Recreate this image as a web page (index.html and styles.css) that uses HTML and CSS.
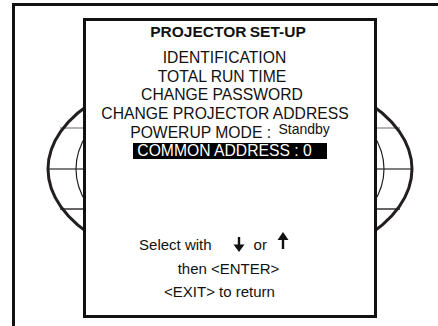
FILE: index.html
```html
<!DOCTYPE html>
<html lang="en">

<head>
    <meta charset="UTF-8">
    <title>Projector Set-up</title>
    <link rel="stylesheet" href="styles.css">
</head>

<body>
    <div class="screen">
        <!-- globe drawn behind the menu window -->
        <svg class="globe" width="438" height="326" viewBox="0 0 438 326">
            <line x1="60" y1="128" x2="400" y2="128" stroke="#9a9a9a" stroke-width="1.5" />
            <line x1="48" y1="169" x2="412" y2="169" stroke="#555" stroke-width="1.5" />
            <line x1="60" y1="209" x2="400" y2="209" stroke="#333" stroke-width="1.5" />
            <ellipse cx="230" cy="169" rx="154" ry="94" fill="none" stroke="#231f20" stroke-width="1.2" />
            <ellipse cx="230" cy="169" rx="182" ry="102" fill="none" stroke="#231f20" stroke-width="3" />
        </svg>

        <div class="frame">
            <div class="menu-box">
                <div class="title">PROJECTOR SET-UP</div>
                <div class="items">
                    <div class="item shift-a">IDENTIFICATION</div>
                    <div class="item shift-b">TOTAL RUN TIME</div>
                    <div class="item shift-b">CHANGE PASSWORD</div>
                    <div class="item shift-c">CHANGE PROJECTOR ADDRESS</div>
                    <div class="item">POWERUP MODE : <span class="value">Standby</span></div>
                    <div class="item selected">COMMON ADDRESS : 0</div>
                </div>
                <div class="help">
                    <div class="help-row select-row">
                        <span>Select with</span>
                        <svg class="arrow arrow-down" width="12" height="15" viewBox="0 0 12 15">
                            <line x1="6" y1="0" x2="6" y2="9" stroke="#111" stroke-width="2.4" />
                            <polygon points="0.5,7.5 11.5,7.5 6,15" fill="#111" />
                        </svg>
                        <span class="or">or</span>
                        <svg class="arrow arrow-up" width="12" height="17" viewBox="0 0 12 17">
                            <polygon points="6,0 11.5,8 0.5,8" fill="#111" />
                            <line x1="6" y1="7" x2="6" y2="17" stroke="#111" stroke-width="2.4" />
                        </svg>
                    </div>
                    <div class="help-row enter-row">then &lt;ENTER&gt;</div>
                    <div class="help-row exit-row">&lt;EXIT&gt; to return</div>
                </div>
            </div>
        </div>
    </div>
</body>

</html>
```

FILE: styles.css
```css
html,
body {
    margin: 0;
    padding: 0;
    background-color: #fff;
    overflow: hidden;
}

body {
    font-family: "Liberation Sans", Arial, sans-serif;
    color: #111;
}

.screen {
    position: relative;
    width: 438px;
    height: 326px;
    overflow: hidden;
}

.globe {
    position: absolute;
    left: 0;
    top: 0;
}

.frame {
    margin: 3px 0 0 12px;
    height: 330px;
    border-top: 3px solid #111;
    border-left: 3px solid #111;
    padding: 12px 0 0 68px;
}

.menu-box {
    position: relative;
    z-index: 1;
    box-sizing: border-box;
    width: 294px;
    height: 300px;
    border: 3px solid #111;
    background-color: #fff;
    display: flex;
    flex-direction: column;
    align-items: center;
}

.title {
    font-size: 15.5px;
    font-weight: bold;
    line-height: 20px;
    margin-top: 1px;
    margin-right: 4px;
    word-spacing: -1px;
}

.items {
    display: flex;
    flex-direction: column;
    align-items: center;
    margin-top: 7px;
}

.item {
    font-size: 15.7px;
    line-height: 18.7px;
    white-space: nowrap;
}

.shift-a {
    margin-right: 11px;
}

.shift-b {
    margin-right: 16px;
}

.shift-c {
    margin-right: 10px;
}

.value {
    font-size: 14px;
    line-height: 10px;
    vertical-align: 4px;
    margin-left: 3px;
}

.selected {
    background-color: #000;
    color: #fff;
    line-height: 16.6px;
    padding: 0 15px 0 4px;
}

.help {
    display: flex;
    flex-direction: column;
    align-items: center;
    margin-top: 74px;
}

.help-row {
    font-size: 15px;
    line-height: 23.5px;
    white-space: nowrap;
}

.select-row {
    display: flex;
    align-items: flex-start;
    margin-right: 32px;
}

.arrow {
    display: block;
}

.arrow-down {
    margin: 3.5px 0 0 21px;
}

.or {
    margin-left: 9px;
}

.arrow-up {
    margin: -1px 0 0 10px;
}

.enter-row {
    margin-left: -3px;
}

.exit-row {
    margin-right: 21px;
}
```
